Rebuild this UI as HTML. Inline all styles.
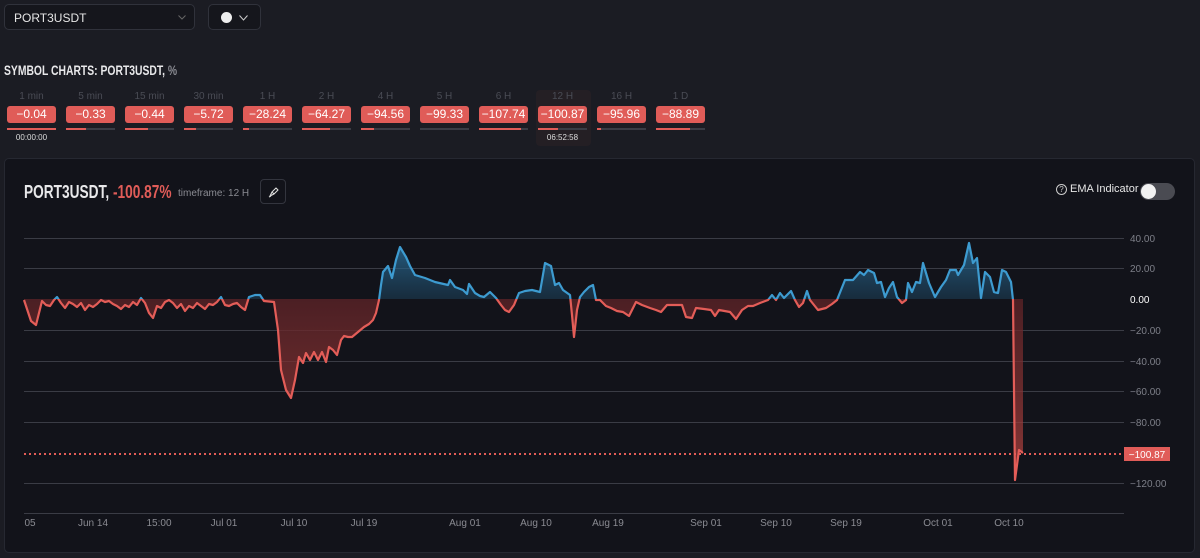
<!DOCTYPE html>
<html><head><meta charset="utf-8"><style>
*{margin:0;padding:0;box-sizing:border-box}
body{width:1200px;height:558px;background:#1b1c23;font-family:"Liberation Sans",sans-serif;position:relative;overflow:hidden;color:#ddd}
.sel{position:absolute;top:4px;height:26px;border:1px solid #30323b;border-radius:5px;background:#15161c}
.title{position:absolute;left:4px;top:62px;font-size:14px;font-weight:bold;color:#e8e8ea;transform:scaleX(0.74);transform-origin:left;white-space:nowrap}
.tab{position:absolute;top:90px;width:49px;text-align:center}
.tab .l{font-size:10px;color:#4a4c55;height:16px;line-height:14px}
.tab .b{background:#e05c58;color:#fff;border-radius:3px;height:17px;line-height:17px;font-size:12px}
.tab .p{height:2px;background:#3a3c45;margin-top:5px;position:relative}
.tab .p i{position:absolute;left:0;top:0;height:2px;background:#e05c58}
.panel{position:absolute;left:4px;top:158px;width:1191px;height:395px;background:#12131a;border:1px solid #262831;border-radius:5px}
</style></head><body>
<div class="sel" style="left:4px;width:191px"><span style="position:absolute;left:9px;top:6px;font-size:12px;color:#e6e6e6">PORT3USDT</span>
<svg style="position:absolute;right:8px;top:10px" width="8" height="5"><path d="M0.5,0.5 L4,4 L7.5,0.5" fill="none" stroke="#666" stroke-width="1"/></svg></div>
<div class="sel" style="left:208px;width:53px"><span style="position:absolute;left:12px;top:7px;width:11px;height:11px;border-radius:50%;background:#eee"></span>
<svg style="position:absolute;left:30px;top:10px" width="9" height="6"><path d="M0.5,0.5 L4.5,5 L8.5,0.5" fill="none" stroke="#ccc" stroke-width="1"/></svg></div>
<div class="title">SYMBOL CHARTS: PORT3USDT, <span style="color:#8a8b92">%</span></div>

<div style="position:absolute;left:536px;top:90px;width:55px;height:56px;background:#241f24;border-radius:4px"></div>
<div class="tab" style="left:7px"><div class="l">1 min</div><div class="b">−0.04</div><div class="p"><i style="width:100%"></i></div></div>
<div style="position:absolute;left:7px;top:133px;width:49px;text-align:center;font-size:8px;color:#ddd">00:00:00</div>
<div class="tab" style="left:66px"><div class="l">5 min</div><div class="b">−0.33</div><div class="p"><i style="width:40%"></i></div></div>
<div class="tab" style="left:125px"><div class="l">15 min</div><div class="b">−0.44</div><div class="p"><i style="width:47%"></i></div></div>
<div class="tab" style="left:184px"><div class="l">30 min</div><div class="b">−5.72</div><div class="p"><i style="width:24%"></i></div></div>
<div class="tab" style="left:243px"><div class="l">1 H</div><div class="b">−28.24</div><div class="p"><i style="width:12%"></i></div></div>
<div class="tab" style="left:302px"><div class="l">2 H</div><div class="b">−64.27</div><div class="p"><i style="width:57%"></i></div></div>
<div class="tab" style="left:361px"><div class="l">4 H</div><div class="b">−94.56</div><div class="p"><i style="width:26%"></i></div></div>
<div class="tab" style="left:420px"><div class="l">5 H</div><div class="b">−99.33</div><div class="p"></div></div>
<div class="tab" style="left:479px"><div class="l">6 H</div><div class="b">−107.74</div><div class="p"><i style="width:85%"></i></div></div>
<div class="tab" style="left:538px"><div class="l">12 H</div><div class="b">−100.87</div><div class="p"><i style="width:40%"></i></div></div>
<div style="position:absolute;left:538px;top:133px;width:49px;text-align:center;font-size:8px;color:#ddd">06:52:58</div>
<div class="tab" style="left:597px"><div class="l">16 H</div><div class="b">−95.96</div><div class="p"><i style="width:8%"></i></div></div>
<div class="tab" style="left:656px"><div class="l">1 D</div><div class="b">−88.89</div><div class="p"><i style="width:70%"></i></div></div>

<div class="panel"></div>
<div style="position:absolute;left:24px;top:182px;font-size:18px;font-weight:bold;color:#e8e8ea;transform:scaleX(0.76);transform-origin:left;white-space:nowrap">PORT3USDT, <span style="color:#e05c58">-100.87%</span></div>
<div style="position:absolute;left:178px;top:188px;font-size:10px;color:#8a8b92">timeframe: 12 H</div>
<div style="position:absolute;left:260px;top:179px;width:26px;height:25px;border:1px solid #33353e;border-radius:4px">
<svg style="position:absolute;left:7px;top:6px" width="12" height="12"><path d="M2,10 L4,6 L8,2 L10,4 L6,8 Z M4,6 L6,8 M1,11 L3,10" fill="none" stroke="#ddd" stroke-width="1.1" stroke-linejoin="round"/></svg></div>
<div style="position:absolute;left:1056px;top:184px;width:11px;height:11px;border:1px solid #ccc;border-radius:50%;font-size:8px;line-height:9px;text-align:center;color:#ccc">?</div>
<div style="position:absolute;left:1070px;top:183px;font-size:11px;color:#e6e6e6">EMA Indicator</div>
<div style="position:absolute;left:1140px;top:183px;width:35px;height:17px;border-radius:9px;background:#4a4b52"><div style="position:absolute;left:1px;top:1px;width:15px;height:15px;border-radius:50%;background:#f2f2f2"></div></div>

<svg width="1200" height="558" style="position:absolute;left:0;top:0">
<defs>
<linearGradient id="gb" x1="0" y1="240" x2="0" y2="299" gradientUnits="userSpaceOnUse"><stop offset="0" stop-color="#2f7fb0" stop-opacity="0.75"/><stop offset="1" stop-color="#1d4560" stop-opacity="0.5"/></linearGradient>
<linearGradient id="gr" x1="0" y1="299" x2="0" y2="480" gradientUnits="userSpaceOnUse"><stop offset="0" stop-color="#5a2226" stop-opacity="0.8"/><stop offset="0.5" stop-color="#8a3333" stop-opacity="0.7"/><stop offset="1" stop-color="#c04844" stop-opacity="0.7"/></linearGradient>
<clipPath id="ca"><rect x="0" y="0" width="1200" height="299"/></clipPath>
<clipPath id="cb"><rect x="0" y="299" width="1200" height="300"/></clipPath>
<path id="fillp" d="M24,299 L24,300 L28,312 L31,321 L36,325 L42,301 L46,305 L50,306 L54,300 L57,297 L61,303 L65,308 L69,302 L73,304 L77,307 L81,303 L85,310 L89,305 L93,307 L97,304 L101,300 L105,302 L109,301 L113,304 L117,306 L121,309 L125,305 L129,307 L133,302 L137,305 L141,298 L145,303 L149,313 L153,318 L157,306 L161,308 L165,302 L169,300 L173,303 L177,308 L181,304 L185,311 L189,306 L193,308 L197,303 L201,306 L205,309 L209,304 L213,305 L217,302 L221,297 L225,305 L229,306 L233,304 L237,303 L241,307 L245,310 L249,297 L255,295 L260,295 L264,301 L274,302 L278,330 L281,370 L286,390 L291,398 L295,380 L299,357 L303,363 L306,353 L310,360 L314,352 L318,360 L322,352 L326,362 L329,347 L333,350 L337,355 L341,340 L344,336 L348,337 L352,337 L358,332 L364,327 L369,324 L373,320 L376,313 L379,300 L381,285 L383,272 L388,266 L392,278 L396,260 L400,247 L406,257 L410,266 L415,275 L425,278 L435,282 L448,285 L450,280 L455,287 L463,290 L467,294 L469,284 L475,293 L480,296 L484,297 L490,292 L496,298 L501,305 L505,310 L509,312 L514,305 L519,293 L525,291 L532,290 L540,292 L545,263 L551,266 L555,285 L559,283 L563,290 L570,295 L572,315 L574,337 L577,310 L580,297 L584,292 L589,287 L593,285 L596,300 L600,300 L606,306 L611,308 L617,311 L623,312 L629,316 L636,302 L642,305 L650,308 L656,310 L661,312 L667,305 L682,305 L686,317 L692,318 L696,308 L704,309 L711,310 L715,316 L719,310 L730,312 L736,319 L742,310 L748,306 L753,306 L760,303 L768,300 L772,295 L776,300 L780,293 L784,298 L791,291 L795,300 L799,307 L803,303 L807,291 L810,300 L818,310 L826,308 L832,304 L837,300 L841,290 L845,280 L853,280 L860,272 L864,275 L868,270 L874,273 L877,283 L881,282 L885,297 L889,288 L893,282 L897,297 L902,303 L906,300 L908,283 L912,292 L916,282 L920,283 L923,263 L929,283 L935,297 L941,287 L946,280 L950,270 L956,270 L958,275 L964,265 L969,243 L973,263 L977,258 L981,298 L985,272 L990,277 L994,292 L998,293 L1002,270 L1006,272 L1011,282 L1013,300 L1015,480 L1019,450 L1023,453 L1023,299 Z"/>
<polyline id="ln" fill="none" stroke-width="2.2" stroke-linejoin="round" points="24,300 28,312 31,321 36,325 42,301 46,305 50,306 54,300 57,297 61,303 65,308 69,302 73,304 77,307 81,303 85,310 89,305 93,307 97,304 101,300 105,302 109,301 113,304 117,306 121,309 125,305 129,307 133,302 137,305 141,298 145,303 149,313 153,318 157,306 161,308 165,302 169,300 173,303 177,308 181,304 185,311 189,306 193,308 197,303 201,306 205,309 209,304 213,305 217,302 221,297 225,305 229,306 233,304 237,303 241,307 245,310 249,297 255,295 260,295 264,301 274,302 278,330 281,370 286,390 291,398 295,380 299,357 303,363 306,353 310,360 314,352 318,360 322,352 326,362 329,347 333,350 337,355 341,340 344,336 348,337 352,337 358,332 364,327 369,324 373,320 376,313 379,300 381,285 383,272 388,266 392,278 396,260 400,247 406,257 410,266 415,275 425,278 435,282 448,285 450,280 455,287 463,290 467,294 469,284 475,293 480,296 484,297 490,292 496,298 501,305 505,310 509,312 514,305 519,293 525,291 532,290 540,292 545,263 551,266 555,285 559,283 563,290 570,295 572,315 574,337 577,310 580,297 584,292 589,287 593,285 596,300 600,300 606,306 611,308 617,311 623,312 629,316 636,302 642,305 650,308 656,310 661,312 667,305 682,305 686,317 692,318 696,308 704,309 711,310 715,316 719,310 730,312 736,319 742,310 748,306 753,306 760,303 768,300 772,295 776,300 780,293 784,298 791,291 795,300 799,307 803,303 807,291 810,300 818,310 826,308 832,304 837,300 841,290 845,280 853,280 860,272 864,275 868,270 874,273 877,283 881,282 885,297 889,288 893,282 897,297 902,303 906,300 908,283 912,292 916,282 920,283 923,263 929,283 935,297 941,287 946,280 950,270 956,270 958,275 964,265 969,243 973,263 977,258 981,298 985,272 990,277 994,292 998,293 1002,270 1006,272 1011,282 1013,300 1015,480 1019,450 1023,453"/>
</defs>
<g stroke="#3a3c45" stroke-width="1">
<line x1="24" y1="238.5" x2="1124" y2="238.5"/><line x1="24" y1="268.5" x2="1124" y2="268.5"/>
<line x1="24" y1="330.5" x2="1124" y2="330.5"/><line x1="24" y1="361.5" x2="1124" y2="361.5"/>
<line x1="24" y1="391.5" x2="1124" y2="391.5"/><line x1="24" y1="422.5" x2="1124" y2="422.5"/>
<line x1="24" y1="483.5" x2="1124" y2="483.5"/><line x1="24" y1="513.5" x2="1124" y2="513.5"/>
</g>
<g font-size="10" fill="#7d7f88" font-family="Liberation Sans">
<text x="1130" y="242">40.00</text><text x="1130" y="272">20.00</text><text x="1130" y="303" fill="#fff">0.00</text>
<text x="1130" y="334">−20.00</text><text x="1130" y="365">−40.00</text><text x="1130" y="395">−60.00</text>
<text x="1130" y="426">−80.00</text><text x="1130" y="487">−120.00</text>
</g>
<g font-size="10" fill="#8a8b92" font-family="Liberation Sans" text-anchor="middle">
<text x="30" y="526">05</text><text x="93" y="526">Jun 14</text><text x="159" y="526">15:00</text><text x="224" y="526">Jul 01</text>
<text x="294" y="526">Jul 10</text><text x="364" y="526">Jul 19</text><text x="465" y="526">Aug 01</text><text x="536" y="526">Aug 10</text>
<text x="608" y="526">Aug 19</text><text x="706" y="526">Sep 01</text><text x="776" y="526">Sep 10</text><text x="846" y="526">Sep 19</text>
<text x="938" y="526">Oct 01</text><text x="1009" y="526">Oct 10</text>
</g>
<use href="#fillp" fill="url(#gb)" clip-path="url(#ca)"/>
<use href="#fillp" fill="url(#gr)" clip-path="url(#cb)"/>
<use href="#ln" stroke="#3d9bd0" clip-path="url(#ca)"/>
<use href="#ln" stroke="#e35d58" clip-path="url(#cb)"/>
<line x1="24" y1="454" x2="1124" y2="454" stroke="#e35d58" stroke-width="2" stroke-dasharray="2,3"/>
<rect x="1124" y="447" width="46" height="14" fill="#e05c58"/>
<text x="1147" y="458" font-size="10" fill="#fff" text-anchor="middle" font-family="Liberation Sans">−100.87</text>
</svg>
</body></html>
